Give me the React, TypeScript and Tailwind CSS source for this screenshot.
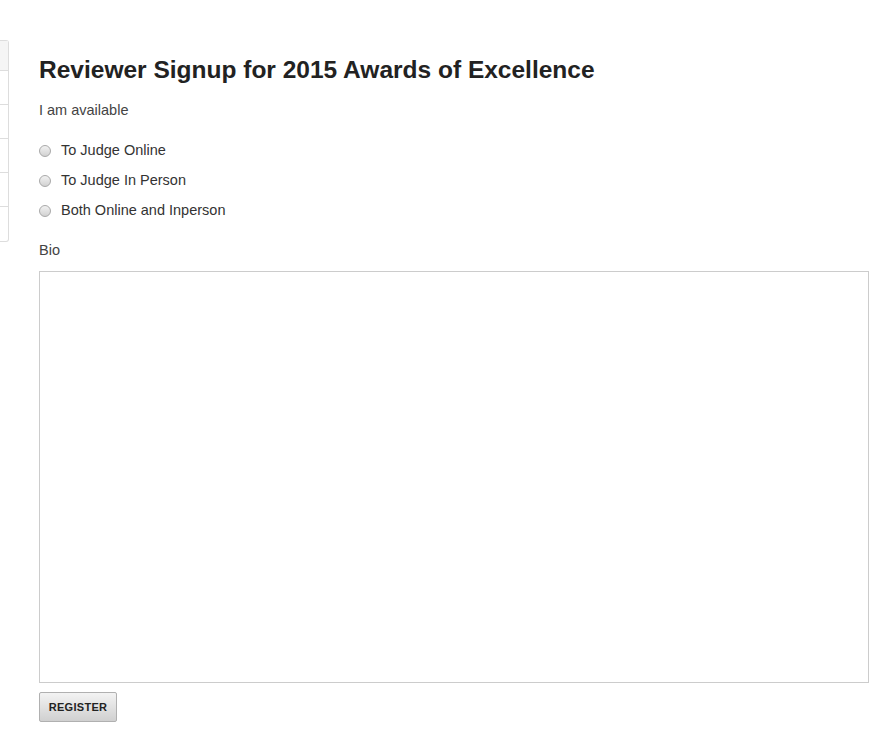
export default function App() {
  return (
    <div className="relative w-[890px] h-[747px] bg-white overflow-hidden" style={{ fontFamily: '"Liberation Sans", Arial, sans-serif' }}>
      <div className="absolute left-0 top-[40px] w-[9px] h-[202px] border border-l-0 border-[#dddddd] rounded-br-[3px] rounded-tr-[3px] flex flex-col">
        <div className="h-[30px] bg-[#f5f5f5] border-b border-[#dddddd]" />
        <div className="h-[34px] border-b border-[#dddddd]" />
        <div className="h-[34px] border-b border-[#dddddd]" />
        <div className="h-[34px] border-b border-[#dddddd]" />
        <div className="h-[34px] border-b border-[#dddddd]" />
        <div className="flex-1" />
      </div>
      <div className="pl-[39px] pt-[55px] w-[869px]">
        <h1 className="text-[24.5px] leading-[30px] font-bold text-[#222222] whitespace-nowrap">Reviewer Signup for 2015 Awards of Excellence</h1>
        <p className="mt-[15px] text-[14.5px] leading-[20px] text-[#444444]">I am available</p>
        <div className="mt-[21px] flex flex-col gap-[10px]">
          {["To Judge Online", "To Judge In Person", "Both Online and Inperson"].map((t) => (
            <label key={t} className="flex items-center h-[20px] text-[14.5px] text-[#333333]">
              <span className="w-[12px] h-[12px] -mt-[1px] rounded-full border border-[#a9a9a9] bg-gradient-to-b from-[#f2f2f2] to-[#d2d2d2] mr-[10px]" />
              {t}
            </label>
          ))}
        </div>
        <p className="mt-[19px] text-[14.5px] leading-[20px] text-[#444444]">Bio</p>
        <div className="mt-[11px] w-[830px] h-[412px] border border-[#cccccc] bg-white" />
        <button className="mt-[9px] w-[78px] h-[30px] border border-[#b0b0b0] rounded-[2px] bg-gradient-to-b from-[#f3f3f3] to-[#d0d0d0] text-[11px] font-bold text-[#222222] tracking-[0.3px] flex items-center justify-center">
          REGISTER
        </button>
      </div>
    </div>
  );
}
